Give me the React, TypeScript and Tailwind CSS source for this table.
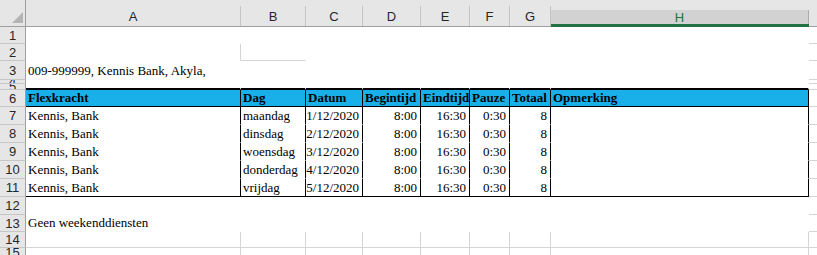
import React from "react";

type Line = "none" | "grid" | "black" | "thick";

const colWidths = [215, 65, 57, 58, 49, 40, 41, 258];
const letters = ["A", "B", "C", "D", "E", "F", "G", "H"];

type Row = {
  n: number;
  h: number;
  cells?: (string | null)[];
  bold?: boolean;
  fill?: boolean;
};

const days = ["maandag", "dinsdag", "woensdag", "donderdag", "vrijdag"];

const rows: Row[] = [
  { n: 1, h: 17 },
  { n: 2, h: 17 },
  { n: 3, h: 19, cells: ["009-999999, Kennis Bank, Akyla,"] },
  { n: 4, h: 4 },
  { n: 5, h: 6 },
  {
    n: 6,
    h: 17,
    bold: true,
    fill: true,
    cells: ["Flexkracht", "Dag", "Datum", "Begintijd", "Eindtijd", "Pauze", "Totaal", "Opmerking"],
  },
  ...days.map((d, i) => ({
    n: 7 + i,
    h: 18,
    cells: ["Kennis, Bank", d, `${i + 1}/12/2020`, "8:00", "16:30", "0:30", "8", ""],
  })),
  { n: 12, h: 18 },
  { n: 13, h: 17, cells: ["Geen weekenddiensten"] },
  { n: 14, h: 16 },
  { n: 15, h: 10 },
];

const rightCls: Record<Line, string> = {
  none: "border-r border-r-white",
  grid: "border-r border-r-[#d4d4d4]",
  black: "border-r border-r-black",
  thick: "border-r-2 border-r-black",
};
const bottomCls: Record<Line, string> = {
  none: "border-b border-b-white",
  grid: "border-b border-b-[#d4d4d4]",
  black: "border-b border-b-black",
  thick: "border-b-2 border-b-black",
};

function lines(n: number, c: number): { r: Line; b: Line } {
  if (n === 2) return { r: c === 0 ? "grid" : "none", b: c === 1 ? "grid" : "none" };
  if (n === 5) return { r: "none", b: "thick" };
  if (n === 6) return { r: "black", b: "black" };
  if (n >= 7 && n <= 10) return { r: "black", b: "none" };
  if (n === 11) return { r: "black", b: "black" };
  if (n === 14) return { r: "grid", b: "grid" };
  if (n === 15) return { r: "grid", b: "none" };
  return { r: "none", b: "none" };
}

const ColHeader = () => (
  <div className="flex h-[27px] bg-[#e6e6e6]">
    <div className="relative w-[26px] shrink-0 border-r border-b border-[#9f9f9f]">
      <svg className="absolute left-[12px] top-[12px]" width="11" height="11" viewBox="0 0 11 11">
        <polygon points="11,0 11,11 0,11" fill="#b4b4b4" />
      </svg>
    </div>
    {letters.map((l, i) =>
      l === "H" ? (
        <div key={l} style={{ width: colWidths[i] }} className="flex shrink-0 flex-col">
          <div className="h-[10px]" />
          <div className="flex h-[14px] items-center justify-center border-r border-[#ababab] bg-[#d2d2d2] pt-[1px] text-[#217346]">
            {l}
          </div>
          <div className="h-[3px] bg-[#217346]" />
        </div>
      ) : (
        <div key={l} style={{ width: colWidths[i] }} className="flex shrink-0 flex-col border-b border-[#9f9f9f]">
          <div className="h-[10px]" />
          <div className="flex flex-1 items-center justify-center border-r border-[#c4c4c4] pt-[1px]">{l}</div>
        </div>
      )
    )}
    <div className="flex-1 border-b border-[#9f9f9f]" />
  </div>
);

const right = (n: number, c: number) => c >= 2 && n >= 7 && n <= 11;

export default function App() {
  return (
    <div className="h-[255px] w-[817px] overflow-hidden bg-white [font-family:Liberation_Sans,Arial,sans-serif] text-[13px] text-[#262626]">
      <ColHeader />
      {rows.map((row) => (
        <div key={row.n} style={{ height: row.h }} className="flex">
          <div className="flex w-[26px] shrink-0 items-center justify-center overflow-hidden border-r border-b border-r-[#9f9f9f] border-b-[#c6c6c6] bg-[#e6e6e6] leading-none">
            {row.n}
          </div>
          {colWidths.map((w, c) => {
            const { r, b } = lines(row.n, c);
            const txt = row.cells?.[c] ?? "";
            return (
              <div
                key={c}
                style={{ width: w }}
                className={`flex shrink-0 items-end overflow-visible whitespace-nowrap px-[2px] pb-[1px] [font-family:Liberation_Serif,Times_New_Roman,serif] leading-[15px] text-black ${rightCls[r]} ${bottomCls[b]} ${
                  row.fill ? "bg-[#19afe9]" : "bg-white"
                } ${row.bold ? "font-bold" : ""} ${right(row.n, c) ? "justify-end pr-[3px]" : ""}`}
              >
                {txt}
              </div>
            );
          })}
          <div className={`flex-1 border-b ${row.n === 15 ? "border-b-transparent" : "border-b-[#d4d4d4]"}`} />
        </div>
      ))}
    </div>
  );
}
